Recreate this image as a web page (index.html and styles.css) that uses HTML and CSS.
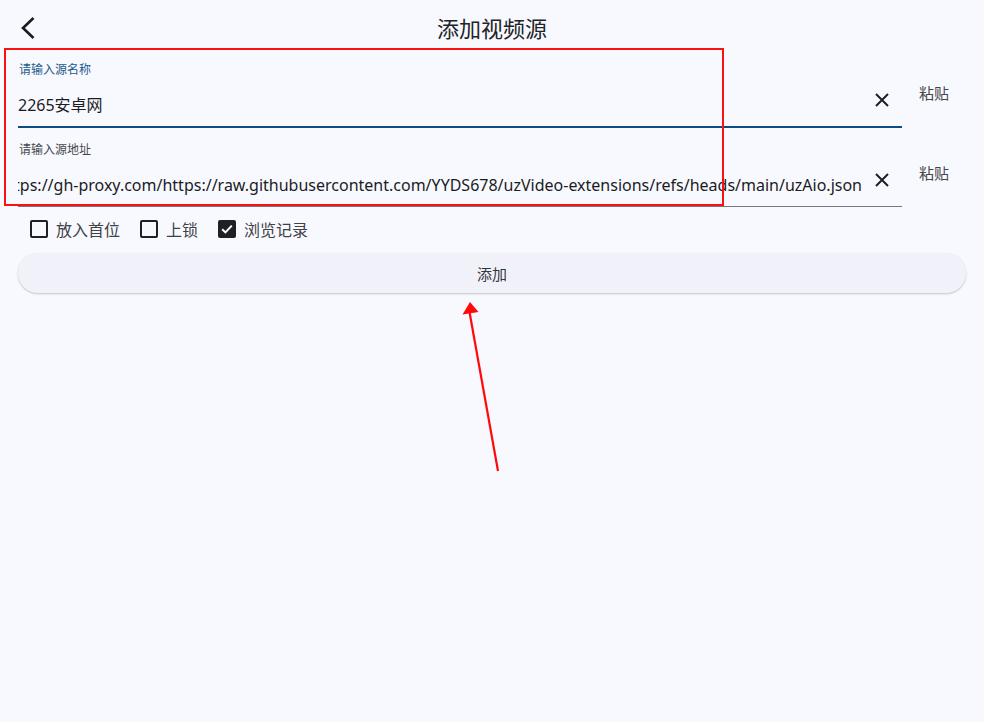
FILE: index.html
```html
<!DOCTYPE html>
<html lang="zh-CN">
<head>
<meta charset="utf-8">
<title>添加视频源</title>
<link rel="stylesheet" href="styles.css">
</head>
<body>
<div class="page">
  <header class="appbar">
    <button class="back" aria-label="返回">
      <svg width="24" height="24" viewBox="0 0 24 24"><polyline points="17.5,3 7,13 17.5,23" fill="none" stroke="#1b1c1f" stroke-width="2.6" stroke-linecap="butt" stroke-linejoin="miter"/></svg>
    </button>
    <h1 class="title">添加视频源</h1>
    <div></div>
  </header>

  <main class="form">
    <div class="row">
      <div class="field focused">
        <div class="label">请输入源名称</div>
        <div class="input-line">
          <div class="value"><span>2265安卓网</span></div>
          <span class="clear"><svg width="14" height="14" viewBox="0 0 14 14"><path d="M1 1L13 13M13 1L1 13" stroke="#1f2023" stroke-width="2"/></svg></span>
        </div>
      </div>
      <button class="paste">粘贴</button>
    </div>
    <div class="row second">
      <div class="field">
        <div class="label">请输入源地址</div>
        <div class="input-line">
          <div class="value scrolled"><span>https://gh-proxy.com/https://raw.githubusercontent.com/YYDS678/uzVideo-extensions/refs/heads/main/uzAio.json</span></div>
          <span class="clear"><svg width="14" height="14" viewBox="0 0 14 14"><path d="M1 1L13 13M13 1L1 13" stroke="#1f2023" stroke-width="2"/></svg></span>
        </div>
      </div>
      <button class="paste">粘贴</button>
    </div>

    <div class="checks">
      <label class="check"><span class="box"></span><span>放入首位</span></label>
      <label class="check"><span class="box"></span><span>上锁</span></label>
      <label class="check"><span class="box checked"><svg width="14" height="14" viewBox="0 0 14 14"><polyline points="2.2,7.2 5.4,10.4 11.8,3.6" fill="none" stroke="#fff" stroke-width="2"/></svg></span><span>浏览记录</span></label>
    </div>

    <button class="add">添加</button>
  </main>

  <div class="annot-box"></div>
  <svg class="annot-arrow" width="984" height="722" viewBox="0 0 984 722">
    <line x1="498" y1="471" x2="469.5" y2="312" stroke="#ff0a0a" stroke-width="2.2"/>
    <polygon points="470,302 462.5,314.5 478.5,312" fill="#ff0a0a"/>
  </svg>
</div>
</body>
</html>
```

FILE: styles.css
```css
* { box-sizing: border-box; }
html, body { margin: 0; padding: 0; }
body {
  background: #f8f9fe;
  font-family: "Noto Sans", "Noto Sans CJK SC", sans-serif;
  color: #1b1c1f;
  width: 984px;
  height: 722px;
  overflow: hidden;
}
.page { position: relative; width: 984px; height: 722px; }

.appbar {
  height: 56px;
  display: grid;
  grid-template-columns: 56px 1fr 56px;
  align-items: center;
}
.back {
  width: 56px; height: 56px;
  border: 0; background: none; padding: 0;
  display: flex; align-items: center; justify-content: center;
}
.back svg { margin-top: -2px; }
.title {
  margin: 0;
  text-align: center;
  font-size: 22px;
  font-weight: 400;
  color: #222326;
  line-height: 28px;
}

.form { padding: 0 18px; }
.row { display: flex; align-items: flex-start; }
.row.second { margin-top: 8px; }
.field {
  flex: 1;
  min-width: 0;
  padding: 6px 0 9px;
  border-bottom: 1px solid #74777e;
}
.field.focused { border-bottom: 2px solid #0c4c80; }
.field.focused .label { color: #1d5a8c; }
.label {
  font-size: 12px;
  line-height: 16px;
  color: #45474c;
  padding-left: 1px;
}
.input-line {
  display: flex;
  align-items: center;
  margin-top: 15px;
  height: 24px;
}
.value {
  flex: 1;
  min-width: 0;
  display: flex;
  overflow: hidden;
  white-space: nowrap;
  font-size: 16px;
  line-height: 24px;
  color: #1b1c1f;
}
.value.scrolled { justify-content: flex-end; }
.value span { flex: none; }
.clear {
  flex: none;
  width: 40px;
  height: 24px;
  display: flex;
  align-items: center;
  justify-content: center;
  margin-top: -10px;
}
.paste {
  flex: none;
  width: 64px;
  border: 0; background: none; padding: 0;
  margin-top: 26px;
  font-family: inherit;
  font-size: 15px;
  line-height: 22px;
  color: #45464a;
  text-align: center;
}

.checks {
  display: flex;
  align-items: center;
  height: 42px;
  margin-top: 1px;
  padding-left: 12px;
  gap: 20px;
}
.check {
  display: flex;
  align-items: center;
  gap: 8px;
  font-size: 16px;
  color: #404146;
}
.box {
  width: 18px; height: 18px;
  border: 2px solid #1f2023;
  border-radius: 2px;
  display: flex; align-items: center; justify-content: center;
}
.box.checked { background: #1f2023; }

.add {
  display: block;
  width: 100%;
  height: 40px;
  margin-top: 3px;
  border: 0;
  border-radius: 20px;
  background: #f1f2f9;
  box-shadow: 0 1px 2px rgba(0,0,0,0.22);
  font-family: inherit;
  font-size: 15px;
  color: #34363b;
}

.annot-box {
  position: absolute;
  left: 4px; top: 48px;
  width: 720px; height: 158px;
  border: 2px solid #ff1010;
  pointer-events: none;
}
.annot-arrow {
  position: absolute;
  left: 0; top: 0;
  pointer-events: none;
}
```
